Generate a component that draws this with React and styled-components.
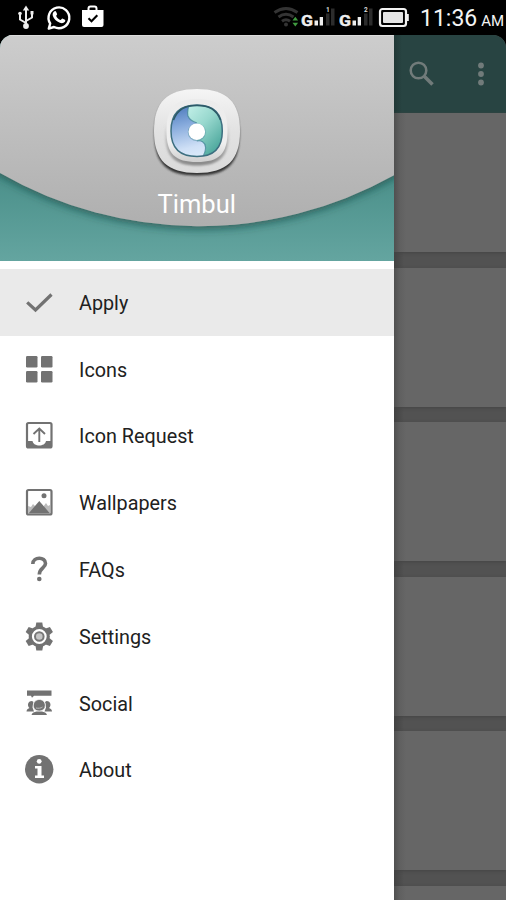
import React from "react";
import styled, { createGlobalStyle } from "styled-components";

const GlobalStyle = createGlobalStyle`
  * {
    box-sizing: border-box;
  }
  body {
    margin: 0;
    background: #000;
    font-family: Roboto, "Liberation Sans", sans-serif;
  }
  svg {
    display: block;
  }
`;

const Screen = styled.div`
  width: 506px;
  height: 900px;
  overflow: hidden;
  display: flex;
  flex-direction: column;
  background: #000;
`;

const StatusBar = styled.header`
  flex: none;
  height: 35px;
  display: flex;
  justify-content: space-between;
  color: #fff;
`;

const StatusGroup = styled.div`
  display: flex;
`;

const Clock = styled.div`
  width: 90px;
  padding: 4px 0 0 4px;
  font-size: 23px;
  line-height: 29px;
  white-space: nowrap;
  color: #f4f4f4;
  span {
    margin-left: 4px;
    font-size: 15px;
  }
`;

const Body = styled.div`
  flex: 1;
  min-height: 0;
  display: flex;
  border-radius: 13px 13px 0 0;
  overflow: hidden;
`;

const Drawer = styled.aside`
  flex: none;
  width: 393.5px;
  display: flex;
  flex-direction: column;
  background: #fff;
`;

const DrawerHeader = styled.div`
  flex: none;
  height: 226px;
  display: grid;
  background: linear-gradient(#468c86 55%, #64a5a0 100%);
  > * {
    grid-area: 1 / 1;
  }
`;

const HeaderContent = styled.div`
  z-index: 1;
  display: flex;
  flex-direction: column;
  align-items: center;
  padding-top: 49px;
`;

const AppName = styled.div`
  margin-top: 8px;
  font-size: 25.5px;
  line-height: 30px;
  color: #fff;
`;

const Menu = styled.nav`
  padding-top: 8px;
  display: flex;
  flex-direction: column;
`;

const MenuItem = styled.div`
  height: 66.8px;
  padding-left: 24px;
  display: flex;
  align-items: center;
  gap: 25px;
  font-size: 19.8px;
  color: #212121;
  background: ${(p) => (p.$active ? "#eaeaea" : "#fff")};
  svg {
    flex: none;
    margin-top: -1px;
  }
  span {
    margin-top: 2px;
  }
`;

const Page = styled.main`
  flex: 1;
  min-width: 0;
  display: flex;
  flex-direction: column;
  overflow: hidden;
  background: linear-gradient(90deg, #424242, #525252 10px);
`;

const Toolbar = styled.div`
  flex: none;
  height: 78px;
  display: flex;
  align-items: center;
  justify-content: space-between;
  padding: 0 20px 0 15px;
  background: linear-gradient(90deg, #213836, #284442 8px);
`;

const Cards = styled.div`
  display: flex;
  flex-direction: column;
  gap: 15.6px;
`;

const Card = styled.div`
  flex: none;
  height: 139px;
  background: linear-gradient(90deg, #505050, #606060 6px, #666 12px);
  box-shadow: 0 1px 3px #444;
`;

function UsbIcon() {
  return (
    <svg width="34" height="35" viewBox="0 0 34 35" fill="none" stroke="#eee" strokeWidth="2">
      <path d="M26 26V9M26 23l-6-3.5V14M26 21l6-3.5v-4" />
      <path d="M26 5.500l3.200 5h-6.400z" fill="#eee" stroke="none" />
      <circle cx="26" cy="26" r="2.9" fill="#eee" stroke="none" />
      <circle cx="20" cy="13.5" r="1.8" fill="#eee" stroke="none" />
      <path d="M30.500 11h3v3.400h-3z" fill="#eee" stroke="none" />
    </svg>
  );
}

function ChatIcon() {
  return (
    <svg width="48" height="35" viewBox="34 0 48 35">
      <path
        d="M48.800 28.600l1.400-5.100A10.400 10.400 0 1 1 54 27z"
        fill="none"
        stroke="#fff"
        strokeWidth="2.4"
        strokeLinejoin="round"
      />
      <path
        d="M54.600 11.200c.6-.3 1.200-.1 1.500.5l1 2.200c.2.5-.9 1.600-.9 2 .9 2 2.400 3.400 4.400 4.100.4.1 1.300-1.500 1.800-1.400l2.500 1.200c.6.3.4 1.400 0 2-1.200 1.500-3.100 1.700-5 1-3.500-1.300-6.100-4-7.100-7-.5-1.900.3-3.900 1.800-4.600z"
        fill="#fff"
      />
    </svg>
  );
}

function StoreIcon() {
  return (
    <svg width="24" height="35" viewBox="82 0 24 35">
      <path d="M88.500 11V8.500a2 2 0 0 1 2-2h4a2 2 0 0 1 2 2V11" fill="none" stroke="#fff" strokeWidth="2" />
      <path d="M82 10h21.500v15a2 2 0 0 1-2 2H84a2 2 0 0 1-2-2z" fill="#fff" />
      <path d="M88.500 18.200l3 3 5.800-6" fill="none" stroke="#000" strokeWidth="2.1" />
    </svg>
  );
}

function WifiIcon() {
  return (
    <svg width="30" height="35" viewBox="271 0 30 35" fill="none" stroke="#343434" strokeWidth="3">
      <path d="M274.500 12.500q11.500-8 23 0M278.500 17q7.500-5.500 15 0M282 21.300q4-3 8 0" />
      <circle cx="286" cy="24.500" r="2" fill="#343434" stroke="none" />
      <path d="M292.500 20.500l2.800-3.800 2.800 3.800zM292.500 22.800l2.800 3.800 2.800-3.800z" fill="#3f9a3f" stroke="none" />
    </svg>
  );
}

function SignalIcon({ slot }) {
  return (
    <svg width="37.5" height="35" viewBox="0 0 37.5 35">
      <text
        x="0"
        y="25.500"
        fontFamily="Roboto, sans-serif"
        fontSize="15.5"
        fontWeight="700"
        fill="#eee"
        stroke="#eee"
        strokeWidth="0.4"
        textLength="12"
        lengthAdjust="spacingAndGlyphs"
      >
        G
      </text>
      <path d="M13.500 20.500h3.500v5h-3.500zM18.700 17h3.300v8.500h-3.300z" fill="#eee" />
      <path d="M25 13.500h3.500v12H25zM30 8.500h3.500v17H30z" fill="#2c2c2c" />
      <text x="25" y="12" fontFamily="Roboto, sans-serif" fontSize="6.500" fontWeight="700" fill="#ddd">
        {slot}
      </text>
    </svg>
  );
}

function BatteryIcon() {
  return (
    <svg width="40" height="35" viewBox="376 0 40 35">
      <rect x="380" y="9" width="26" height="17" rx="2.5" fill="none" stroke="#f2f2f2" strokeWidth="2.2" />
      <path d="M407 14h1.800v7H407z" fill="#f2f2f2" />
      <rect x="383" y="12" width="20" height="11" rx="1" fill="#e4e4e4" />
    </svg>
  );
}

function HeaderCurve() {
  return (
    <svg width="393.5" height="226" viewBox="0 0 393.5 226">
      <defs>
        <linearGradient id="silver" x1="0" y1="0" x2="0" y2="1">
          <stop offset="0" stopColor="#d0d0d0" />
          <stop offset="1" stopColor="#afafaf" />
        </linearGradient>
        <filter id="curveShadow" x="-10%" y="-10%" width="120%" height="130%">
          <feDropShadow dx="0" dy="3" stdDeviation="4" floodColor="#173d39" floodOpacity="0.6" />
        </filter>
      </defs>
      <path
        d="M-20-20H414V128L393.500 140.500A399 399 0 0 1 0 138L-20 126z"
        fill="url(#silver)"
        filter="url(#curveShadow)"
      />
      <path d="M0 .5H393.500" stroke="#dcdcdc" />
    </svg>
  );
}

function Logo() {
  return (
    <svg width="96" height="97" viewBox="149 84 96 97">
      <defs>
        <linearGradient id="plate" x1="0" y1="0" x2="0" y2="1">
          <stop offset="0" stopColor="#f5f5f5" />
          <stop offset=".5" stopColor="#e2e2e2" />
          <stop offset="1" stopColor="#dadada" />
        </linearGradient>
        <linearGradient id="rimShade" x1="0" y1="0" x2="0" y2="1">
          <stop offset=".35" stopColor="#909090" stopOpacity="0" />
          <stop offset="1" stopColor="#858585" />
        </linearGradient>
        <linearGradient id="rim" x1="0" y1="0" x2="0" y2="1">
          <stop offset="0" stopColor="#ececec" />
          <stop offset=".7" stopColor="#efefef" />
          <stop offset="1" stopColor="#cfcfcf" />
        </linearGradient>
        <linearGradient id="blue" x1=".2" y1="0" x2=".45" y2="1">
          <stop offset="0" stopColor="#3f6fb4" />
          <stop offset=".4" stopColor="#86aadc" />
          <stop offset=".8" stopColor="#cfe0f6" />
          <stop offset="1" stopColor="#dcebfa" />
        </linearGradient>
        <linearGradient id="teal" x1="0" y1="0" x2=".7" y2="1">
          <stop offset="0" stopColor="#c9f3ec" />
          <stop offset=".45" stopColor="#98d8ce" />
          <stop offset="1" stopColor="#3f9f94" />
        </linearGradient>
        <filter id="soft" x="-20%" y="-20%" width="140%" height="140%">
          <feGaussianBlur stdDeviation="1.2" />
        </filter>
        <clipPath id="disc">
          <path d="M197 105C213.500 105 222.300 113.500 222.300 131S213.500 156.500 197 156.500 171 148.500 171 131 180.500 105 197 105z" />
        </clipPath>
      </defs>
      <path
        d="M197 91C227 91 239.500 104 239.500 134S227 175.500 197 175.500 154.500 164 154.500 134 167 91 197 91z"
        fill="#303030"
        filter="url(#soft)"
      />
      <path
        d="M197 89C227 89 240 102 240 131S227 173 197 173 154 160 154 131 167 89 197 89z"
        fill="url(#plate)"
      />
      <path
        d="M197 101C220 101 229 110 229 133S220 165.500 197 165.500 165 156 165 133 174 101 197 101z"
        fill="url(#rimShade)"
        filter="url(#soft)"
      />
      <path
        d="M197 99C219 99 227.500 108 227.500 131S219 162 197 162 166.500 154 166.500 131 175 99 197 99z"
        fill="url(#rim)"
      />
      <g clipPath="url(#disc)">
        <path d="M168 101h58v58h-58z" fill="url(#blue)" />
        <path
          d="M191 101C188 107 187 112 188 116C190 121 194 122 197 123L201 132L197 141C201 140 205 142 205.500 147C206 151 204 155 201 160H226V101z"
          fill="url(#teal)"
        />
        <path
          d="M191 101C188 107 187 112 188 116C190 121 194 122 197 123M197 141C201 140 205 142 205.500 147C206 151 204 155 201 160"
          fill="none"
          stroke="#3b7f91"
          strokeOpacity=".7"
          strokeWidth="1.2"
        />
      </g>
      <path
        d="M197 105C213.500 105 222.300 113.500 222.300 131S213.500 156.500 197 156.500 171 148.500 171 131 180.500 105 197 105z"
        fill="none"
        stroke="#3d6f80"
        strokeWidth="1.5"
      />
      <path d="M173.500 120C178 109 185 105.500 197 105.500S216 109 220.500 120" fill="none" stroke="#2d5a68" strokeWidth="1.6" />
      <circle cx="196.800" cy="132.200" r="9" fill="#5d97a8" opacity=".6" />
      <circle cx="196.800" cy="131.700" r="8.300" fill="#fff" />
    </svg>
  );
}

// all menu glyphs share a 30px box
function MenuIcon({ children }) {
  return (
    <svg width="30" height="30" viewBox="0 0 30 30" fill="#727272">
      {children}
    </svg>
  );
}

const items = [
  {
    label: "Apply",
    icon: <path d="M3.200 15.300l8.300 7.700L27.500 7.500" fill="none" stroke="#727272" strokeWidth="3.2" />,
  },
  {
    label: "Icons",
    icon: (
      <>
        <rect x="2" y="2" width="11.5" height="11.5" rx="1.2" />
        <rect x="17" y="2" width="11.5" height="11.5" rx="1.2" />
        <rect x="2" y="17" width="11.5" height="11.5" rx="1.2" />
        <rect x="17" y="17" width="11.5" height="11.5" rx="1.2" />
      </>
    ),
  },
  {
    label: "Icon Request",
    icon: (
      <g fill="none" stroke="#727272">
        <rect x="3" y="3" width="24.5" height="24.5" rx="1.5" strokeWidth="2.2" />
        <path d="M3 21h5.500c1 6 12.500 6 13.500 0h5.500v6.500H3z" fill="#727272" stroke="none" />
        <path d="M15.300 22V8.500M9.500 14l5.800-5.500L21 14" strokeWidth="1.9" />
      </g>
    ),
  },
  {
    label: "Wallpapers",
    icon: (
      <>
        <rect x="3" y="3" width="24.5" height="24.5" rx="1.5" fill="none" stroke="#727272" strokeWidth="2.2" />
        <path d="M4 26v-7l3 1 2-3 4 4 6-1 3-4 2 3 2-1v8z" fill="#bcbcbc" />
        <path d="M4.500 26.500L15.300 14 26 26.500z" />
        <circle cx="20" cy="8.800" r="2.5" />
      </>
    ),
  },
  {
    label: "FAQs",
    icon: (
      <>
        <path
          d="M8.800 10C9 2.500 21.500 2.500 21.500 9.500C21.500 14 15.300 14 15.300 20.500"
          fill="none"
          stroke="#727272"
          strokeWidth="3.6"
        />
        <circle cx="15.300" cy="25" r="2.3" />
      </>
    ),
  },
  {
    label: "Settings",
    icon: (
      <>
        {[0, 60, 120, 180, 240, 300].map((a) => (
          <path key={a} d="M11.500 6l.8-4.500h6L19 6z" transform={`rotate(${a} 15.3 15.5)`} />
        ))}
        <circle cx="15.300" cy="15.500" r="9" fill="none" stroke="#727272" strokeWidth="3.2" />
        <circle cx="15.300" cy="15.500" r="4.3" fill="#c6c6c6" stroke="#777" strokeWidth="2" />
      </>
    ),
  },
  {
    label: "Social",
    icon: (
      <>
        <path d="M3 2.500h24.500v5.300H10l-2 2-1-2H3z" />
        <path d="M2.500 23.500c0-2.500 2-3 3-3.500C3 18 3.500 13 8 13l1.500 1-1 5.500 1.500 4zM28 23.500c0-2.500-2-3-3-3.500 2.500-2 2-7-2.500-7L21 14l1 5.500-1.500 4z" />
        <path
          d="M9.300 17.500c0-8 12-8 12 0 0 3-2 5.500-6 5.500s-6-2.500-6-5.500z"
          stroke="#fff"
          strokeWidth=".8"
        />
        <path d="M12 20c2.500.5 5 .3 6.500-1" fill="none" stroke="#bbb" strokeWidth="1" />
        <path d="M7.500 27c.5-2.500 3-3 5-3.500h5.500c2 .5 4.500 1 5 3.500z" />
      </>
    ),
  },
  {
    label: "About",
    icon: (
      <>
        <circle cx="15.200" cy="15.300" r="14.2" />
        <circle cx="15.200" cy="7.300" r="2.4" fill="#fff" />
        <path d="M11 12h6.500v9.500H20V24h-9v-2.500h2.500v-7H11z" fill="#fff" />
      </>
    ),
  },
];

export default function App() {
  return (
    <>
      <GlobalStyle />
      <Screen>
        <StatusBar>
          <StatusGroup>
            <UsbIcon />
            <ChatIcon />
            <StoreIcon />
          </StatusGroup>
          <StatusGroup>
            <WifiIcon />
            <SignalIcon slot="1" />
            <SignalIcon slot="2" />
            <BatteryIcon />
            <Clock>
              11:36<span>AM</span>
            </Clock>
          </StatusGroup>
        </StatusBar>
        <Body>
          <Drawer>
            <DrawerHeader>
              <HeaderCurve />
              <HeaderContent>
                <Logo />
                <AppName>Timbul</AppName>
              </HeaderContent>
            </DrawerHeader>
            <Menu>
              {items.map((item) => (
                <MenuItem key={item.label} $active={item.label === "Apply"}>
                  <MenuIcon>{item.icon}</MenuIcon>
                  <span>{item.label}</span>
                </MenuItem>
              ))}
            </Menu>
          </Drawer>
          <Page>
            <Toolbar>
              <svg width="26" height="26" viewBox="0 0 26 26" fill="none" stroke="#717b7a">
                <circle cx="9.500" cy="9.500" r="7.8" strokeWidth="2.5" />
                <path d="M15 15l8.500 8.500" strokeWidth="3.5" />
              </svg>
              <svg width="10" height="26" viewBox="0 0 10 26" fill="#717b7a">
                <circle cx="5" cy="4.500" r="2.9" />
                <circle cx="5" cy="13" r="2.9" />
                <circle cx="5" cy="21.500" r="2.9" />
              </svg>
            </Toolbar>
            <Cards>
              {[1, 2, 3, 4, 5, 6].map((n) => (
                <Card key={n} />
              ))}
            </Cards>
          </Page>
        </Body>
      </Screen>
    </>
  );
}
